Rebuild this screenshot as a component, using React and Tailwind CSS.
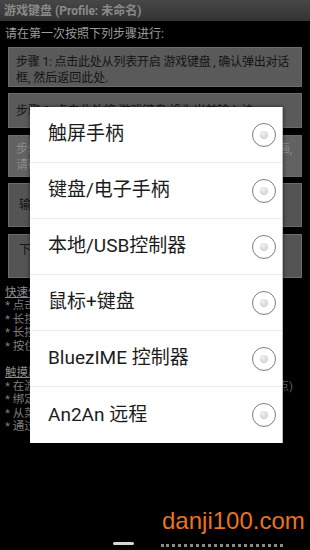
const font = { fontFamily: 'Roboto, "Noto Sans CJK SC", sans-serif' }

const options = ['触屏手柄', '键盘/电子手柄', '本地/USB控制器', '鼠标+键盘', 'BluezIME 控制器', 'An2An 远程']

function Radio() {
  return (
    <span className="flex h-[24px] w-[24px] items-center justify-center rounded-full border-[1.5px] border-[#7c7c7c] bg-white">
      <span className="h-[8px] w-[8px] rounded-full bg-[radial-gradient(circle_at_40%_35%,#f2f2f2,#c4c4c4)]" />
    </span>
  )
}

function Step({ className, children }) {
  return (
    <div className={`mx-[8px] border border-[#6c6c6c] text-[12px] leading-[16px] ${className}`}>{children}</div>
  )
}

export default function App() {
  return (
    <div className="relative h-[550px] w-[310px] overflow-hidden bg-black" style={font}>
      {/* page behind the dialog */}
      <div className="flex h-[21px] items-center bg-gradient-to-b from-[#474747] to-[#333333] pl-[4px] text-[12px] font-bold text-[#8a8a8a]">
        游戏键盘 (Profile: 未命名)
      </div>
      <p className="mt-[6px] pl-[5px] text-[12px] leading-[14px] text-[#9c9c9c]">请在第一次按照下列步骤进行:</p>

      <div className="mt-[6px] flex flex-col gap-[6px]">
        <Step className="h-[40px] bg-[#5a5a5a] px-[7px] pt-[6px] text-[#141414]">
          <div className="whitespace-nowrap tracking-[-0.2px]">步骤 1: 点击此处从列表开启 游戏键盘 , 确认弹出对话</div>
          <div>框, 然后返回此处.</div>
        </Step>
        <Step className="flex h-[35px] items-center bg-[#5a5a5a] px-[7px] text-[#141414]">
          步骤 2: 点击此处将 游戏键盘 设为当前输入法.
        </Step>
        <Step className="mt-[1px] h-[42px] bg-[#626262] pl-[7px] pr-[9px] pt-[5px] text-[#8c8c8c]">
          <div className="flex justify-between">
            <span>步骤 3: 点击此处选择控制器</span>
            <span>画,</span>
          </div>
          <div>请确认设置完成.</div>
        </Step>
        <Step className="flex h-[44px] items-center bg-[#545454] pl-[10px] text-[#141414]">
          输入法设置
        </Step>
        <Step className="mt-[1px] h-[44px] bg-[#545454] pl-[10px] pt-[7px] text-[#141414]">
          下载更多键盘布局
        </Step>
      </div>

      <div className="mt-[8px] pl-[5px] text-[11.5px] leading-[13.4px] text-[#7e7e7e]">
        <div className="text-[#8e8e8e] underline">快速使用说明:</div>
        <div>* 点击屏幕按钮进行游戏</div>
        <div>* 长按按钮进行设置</div>
        <div>* 长按菜单键打开设置</div>
        <div>* 按住返回键退出</div>
        <div className="h-[13.4px]" />
        <div className="text-[#8e8e8e] underline">触摸屏手柄:</div>
        <div className="flex justify-between pr-[17px]">
          <span>* 在游戏中长按屏幕</span>
          <span className="text-[#5e5e5e]">点)</span>
        </div>
        <div>* 绑定按键到屏幕</div>
        <div>* 从菜单中选择布局</div>
        <div>* 通过设置调整大小</div>
      </div>

      {/* dialog */}
      <div className="absolute left-[30px] top-[107px] w-[253px] border-r border-[#bdbdbd] bg-white shadow-[0_0_4px_rgba(0,0,0,0.6)]">
        {options.map((o, i) => (
          <div
            key={o}
            className={`flex h-[56px] items-center justify-between pl-[18px] pr-[6px] ${
              i < options.length - 1 ? 'border-b border-[#ececec]' : 'h-[55px]'
            }`}
          >
            <span className="text-[19px] text-[#1c1c1c]">{o}</span>
            <Radio />
          </div>
        ))}
      </div>

      {/* watermark */}
      <div
        className="absolute left-[162px] top-[507px] text-[24px] leading-[28px] text-[#e8741e]"
        style={{ fontFamily: '"Liberation Sans", Arial, sans-serif' }}
      >
        danji100.com
      </div>
      <div className="absolute left-[113px] top-[542px] h-[3px] w-[21px] rounded-full bg-[#d8d8d8] blur-[0.5px]" />
      <div className="absolute left-[161px] top-[544px] h-[4px] w-[122px] border-t-[3px] border-dotted border-[#8a8a8a]" />
    </div>
  )
}
